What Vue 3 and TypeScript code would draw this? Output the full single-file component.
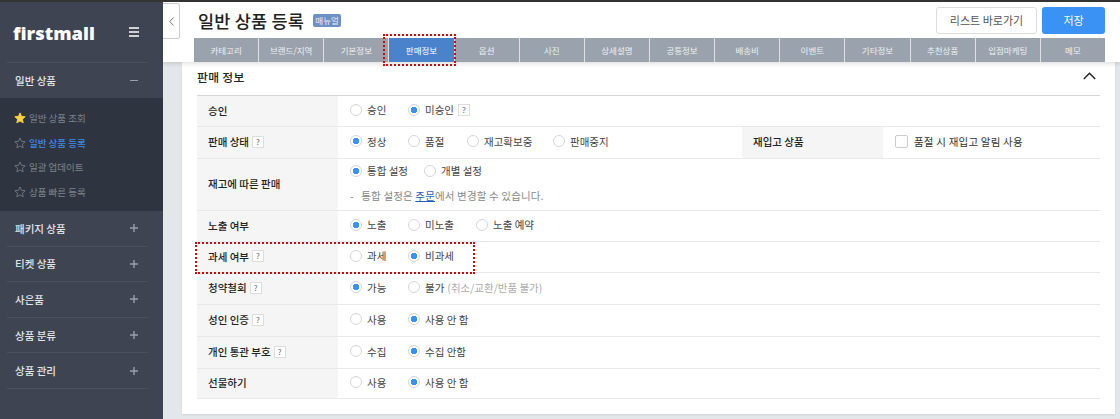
<script setup lang="ts">
interface Opt { label: string; on?: boolean; w: number; help?: boolean; note?: string }
interface Row { label: string; help?: boolean; h: number; opts: Opt[]; guide?: boolean; extra?: boolean }

const subItems = [
  { label: '일반 상품 조회', fav: true },
  { label: '일반 상품 등록', active: true },
  { label: '일괄 업데이트' },
  { label: '상품 빠른 등록' },
]
const groups = ['패키지 상품', '티켓 상품', '사은품', '상품 분류', '상품 관리']
const tabs = ['카테고리', '브랜드/지역', '기본정보', '판매정보', '옵션', '사진', '상세설명', '공통정보', '배송비', '이벤트', '기타정보', '추천상품', '입점마케팅', '메모']
const rows: Row[] = [
  { label: '승인', h: 31, opts: [{ label: '승인', w: 58 }, { label: '미승인', on: true, help: true, w: 60 }] },
  { label: '판매 상태', help: true, h: 32, extra: true, opts: [{ label: '정상', on: true, w: 58 }, { label: '품절', w: 59 }, { label: '재고확보중', w: 86 }, { label: '판매중지', w: 60 }] },
  { label: '재고에 따른 판매', h: 52, guide: true, opts: [{ label: '통합 설정', on: true, w: 74 }, { label: '개별 설정', w: 60 }] },
  { label: '노출 여부', h: 31, opts: [{ label: '노출', on: true, w: 58 }, { label: '미노출', w: 68 }, { label: '노출 예약', w: 60 }] },
  { label: '과세 여부', help: true, h: 31, opts: [{ label: '과세', w: 58 }, { label: '비과세', on: true, w: 60 }] },
  { label: '청약철회', help: true, h: 32, opts: [{ label: '가능', on: true, w: 58 }, { label: '불가', note: '(취소/교환/반품 불가)', w: 160 }] },
  { label: '성인 인증', help: true, h: 32, opts: [{ label: '사용', w: 58 }, { label: '사용 안 함', on: true, w: 70 }] },
  { label: '개인 통관 부호', help: true, h: 32, opts: [{ label: '수집', w: 58 }, { label: '수집 안함', on: true, w: 70 }] },
  { label: '선물하기', h: 30, opts: [{ label: '사용', w: 58 }, { label: '사용 안 함', on: true, w: 70 }] },
]
const starPath = 'M6 .9l1.5 3.4 3.7.4-2.8 2.5.8 3.6L6 9l-3.2 1.8.8-3.6L.8 4.7l3.7-.4z'
</script>

<template>
  <div class="page">
    <aside class="sidebar">
      <div class="brand">
        <span class="logo">firstmall</span>
        <svg class="burger" width="10" height="10" viewBox="0 0 10 10"><path d="M0 1h10M0 5h10M0 9h10" stroke="#fff" stroke-width="1.4" /></svg>
      </div>
      <div class="group open">
        <span>일반 상품</span>
        <i class="minus"></i>
      </div>
      <ul class="sub">
        <li v-for="item in subItems" :key="item.label" :class="{ active: item.active }">
          <svg width="12" height="12" viewBox="0 0 12 12">
            <path :d="starPath" :fill="item.fav ? '#f7d33c' : 'none'" :stroke="item.fav ? '#f7d33c' : '#737985'" stroke-width="0.9" />
          </svg>
          {{ item.label }}
        </li>
      </ul>
      <div v-for="g in groups" :key="g" class="group">
        <span>{{ g }}</span>
        <svg width="8" height="8" viewBox="0 0 8 8"><path d="M4 0v8M0 4h8" stroke="#9aa0aa" stroke-width="1.4" /></svg>
      </div>
    </aside>

    <main class="main">
      <header class="header">
        <button class="back" type="button">
          <svg width="5" height="9" viewBox="0 0 5 9"><path d="M4.5.5L.8 4.5l3.7 4" fill="none" stroke="#777" /></svg>
        </button>
        <div class="title-row">
          <h1>일반 상품 등록</h1>
          <span class="manual">매뉴얼</span>
          <div class="actions">
            <button class="btn-list" type="button">리스트 바로가기</button>
            <button class="btn-save" type="button">저장</button>
          </div>
        </div>
        <nav class="tabs">
          <span v-for="t in tabs" :key="t" class="tab" :class="{ current: t === '판매정보' }">{{ t }}</span>
        </nav>
      </header>

      <section class="card">
        <div class="card-head">
          <h2>판매 정보</h2>
          <svg width="13" height="8" viewBox="0 0 13 8"><path d="M.8 7L6.5 1.2 12.2 7" fill="none" stroke="#222" stroke-width="1.4" /></svg>
        </div>
        <div class="table">
          <div v-for="row in rows" :key="row.label" class="row" :style="{ height: row.h + 'px' }">
            <div class="th">{{ row.label }}<i v-if="row.help" class="help">?</i></div>
            <div class="td" :class="{ stacked: row.guide, 'main-td': row.extra }">
              <div class="opts">
                <label v-for="o in row.opts" :key="o.label" class="opt" :style="{ minWidth: o.w + 'px' }">
                  <i class="radio" :class="{ on: o.on }"></i>{{ o.label }}
                  <i v-if="o.help" class="help">?</i>
                  <span v-if="o.note" class="note">{{ o.note }}</span>
                </label>
              </div>
              <p v-if="row.guide" class="guide">- &nbsp;&nbsp;통합 설정은 <a>주문</a>에서 변경할 수 있습니다.</p>
            </div>
            <template v-if="row.extra">
              <div class="th">재입고 상품</div>
              <div class="td restock"><i class="check"></i>품절 시 재입고 알림 사용</div>
            </template>
          </div>
          <div class="mark-tax"></div>
        </div>
      </section>
      <div class="mark-tab"></div>
    </main>
  </div>
</template>

<style>
html, body { margin: 0; background: #e4e7ea; }
</style>

<style scoped>
.page {
  display: flex;
  width: 1120px;
  height: 419px;
  overflow: hidden;
  border-top: 2px solid #333;
  box-sizing: border-box;
  font-family: "Noto Sans CJK KR", "Noto Sans", sans-serif;
  font-size: 10.5px;
  color: #333;
}
.sidebar {
  width: 163px;
  flex: none;
  background: #3e4452;
  color: #e3e5e8;
}
.brand {
  display: flex;
  align-items: center;
  justify-content: space-between;
  height: 60px;
  margin: 0 24px 0 13px;
}
.logo {
  font-family: "Open Sans", sans-serif;
  font-weight: 800;
  font-size: 18.4px;
  color: #fff;
}
.group {
  display: flex;
  align-items: center;
  justify-content: space-between;
  height: 35.6px;
  margin: 0 15px 0 7px;
  padding: 0 10px 0 8px;
  border-bottom: 1px solid #4a505d;
  box-sizing: border-box;
  font-size: 10.5px;
  font-weight: 500;
}
.group.open { height: 36px; border-bottom: 0; border-top: 1px solid #4a505d; }
.minus { width: 8px; height: 1.5px; background: #9aa0aa; }
.sub {
  list-style: none;
  margin: 0;
  padding: 8px 0 7px 14px;
  background: #2f3540;
  height: 113px;
  box-sizing: border-box;
  color: #7d838d;
}
.sub li {
  display: flex;
  align-items: center;
  gap: 3px;
  height: 24.5px;
  font-size: 9.5px;
}
.sub li.active { color: #3e8be6; font-weight: 500; }
.sub svg { flex: none; }

.main { position: relative; flex: 1; min-width: 0; }
.header {
  position: relative;
  height: 60px;
  background: #fff;
  box-shadow: 0 2px 4px rgba(0, 0, 0, .12);
  z-index: 2;
}
.back {
  position: absolute;
  left: 0;
  top: 1px;
  width: 17px;
  height: 36px;
  padding: 0;
  display: flex;
  align-items: center;
  justify-content: center;
  background: #fff;
  border: 1px solid #ccc;
  border-left: 0;
  border-radius: 0 3px 3px 0;
}
.title-row {
  display: flex;
  align-items: center;
  height: 36px;
  padding: 0 15px 0 35px;
}
h1 {
  margin: 0;
  font-size: 17.5px;
  font-weight: 500;
  color: #222;
  letter-spacing: .2px;
}
.manual {
  margin-left: 9px;
  width: 28px;
  height: 13px;
  line-height: 13px;
  text-align: center;
  border-radius: 2px;
  background: #6d90c4;
  color: #e9eef6;
  font-size: 8.5px;
}
.actions { display: flex; gap: 5px; margin-left: auto; }
.actions button {
  height: 27px;
  padding: 0;
  border-radius: 3px;
  font-family: inherit;
  font-size: 11px;
}
.btn-list { width: 101px; background: #fff; border: 1px solid #ddd; color: #555; }
.btn-save { width: 63px; background: #3a92f5; border: 0; color: #fff; }
.tabs {
  display: flex;
  height: 24px;
  margin: 0 15px 0 31px;
}
.tab {
  flex: 1;
  display: flex;
  align-items: center;
  justify-content: center;
  background: #9aa3ad;
  color: #eef0f2;
  font-size: 8.5px;
  border-right: 1px solid #dfe2e5;
}
.tab:last-child { border-right: 0; }
.tab.current { background: #4a82cc; color: #fff; }

.card {
  position: relative;
  height: 352px;
  margin: 0 5px 0 19px;
  padding: 0 15px;
  box-sizing: border-box;
  background: #fff;
  box-shadow: 0 1px 2px rgba(0, 0, 0, .08);
}
.card-head {
  display: flex;
  align-items: center;
  justify-content: space-between;
  height: 28px;
  padding: 0 4px 5px 0;
  border-bottom: 1px solid #d5d5d5;
}
h2 { margin: 0; font-size: 11.8px; font-weight: 500; color: #222; letter-spacing: .3px; }
.table { position: relative; }
.row {
  display: flex;
  box-sizing: border-box;
  border-bottom: 1px solid #e8e8e8;
}
.th {
  display: flex;
  align-items: center;
  flex: none;
  width: 141px;
  padding: 0 0 2px 11px;
  box-sizing: border-box;
  background: #f5f5f5;
  color: #222;
  font-weight: 500;
}
.th .help { margin-left: 3px; }
.td {
  flex: 1;
  display: flex;
  align-items: center;
  box-sizing: border-box;
  padding: 0 0 3px 12px;
  min-width: 0;
}
.td.main-td { flex: none; width: 404px; }
.td.restock { letter-spacing: .2px; }
.td.stacked { flex-direction: column; align-items: flex-start; justify-content: flex-start; padding-top: 4px; }
.opts { display: flex; }
.opt { display: flex; align-items: center; white-space: nowrap; color: #444; }
.radio {
  flex: none;
  box-sizing: border-box;
  width: 12px;
  height: 12px;
  margin-right: 5px;
  border: 1px solid #d6d6d6;
  border-radius: 50%;
  background: #fff;
}
.radio.on {
  background: radial-gradient(circle, #3a92f5 0 3px, #fff 3.5px);
}
.help {
  display: inline-block;
  box-sizing: border-box;
  width: 12px;
  height: 12px;
  margin-left: 4px;
  line-height: 10px;
  text-align: center;
  border: 1px solid #ddd;
  font-style: normal;
  font-weight: 400;
  font-size: 8px;
  color: #666;
  background: #fff;
}
.note { margin-left: 3px; color: #aaa; }
.guide { margin: 10px 0 0; color: #888; letter-spacing: .15px; }
.guide a { color: #1d5fc0; text-decoration: underline; }
.check {
  flex: none;
  width: 13px;
  height: 13px;
  margin-right: 6px;
  border: 1px solid #ccc;
  border-radius: 2px;
  box-sizing: border-box;
}
.mark-tax {
  position: absolute;
  left: -2px;
  top: 146px;
  width: 280px;
  height: 32px;
  box-sizing: border-box;
  border: 2px dotted #d80000;
  pointer-events: none;
}
.mark-tab {
  position: absolute;
  left: 220px;
  top: 32px;
  width: 73px;
  height: 32px;
  box-sizing: border-box;
  border: 2px dotted #d80000;
  z-index: 3;
  pointer-events: none;
}
</style>
